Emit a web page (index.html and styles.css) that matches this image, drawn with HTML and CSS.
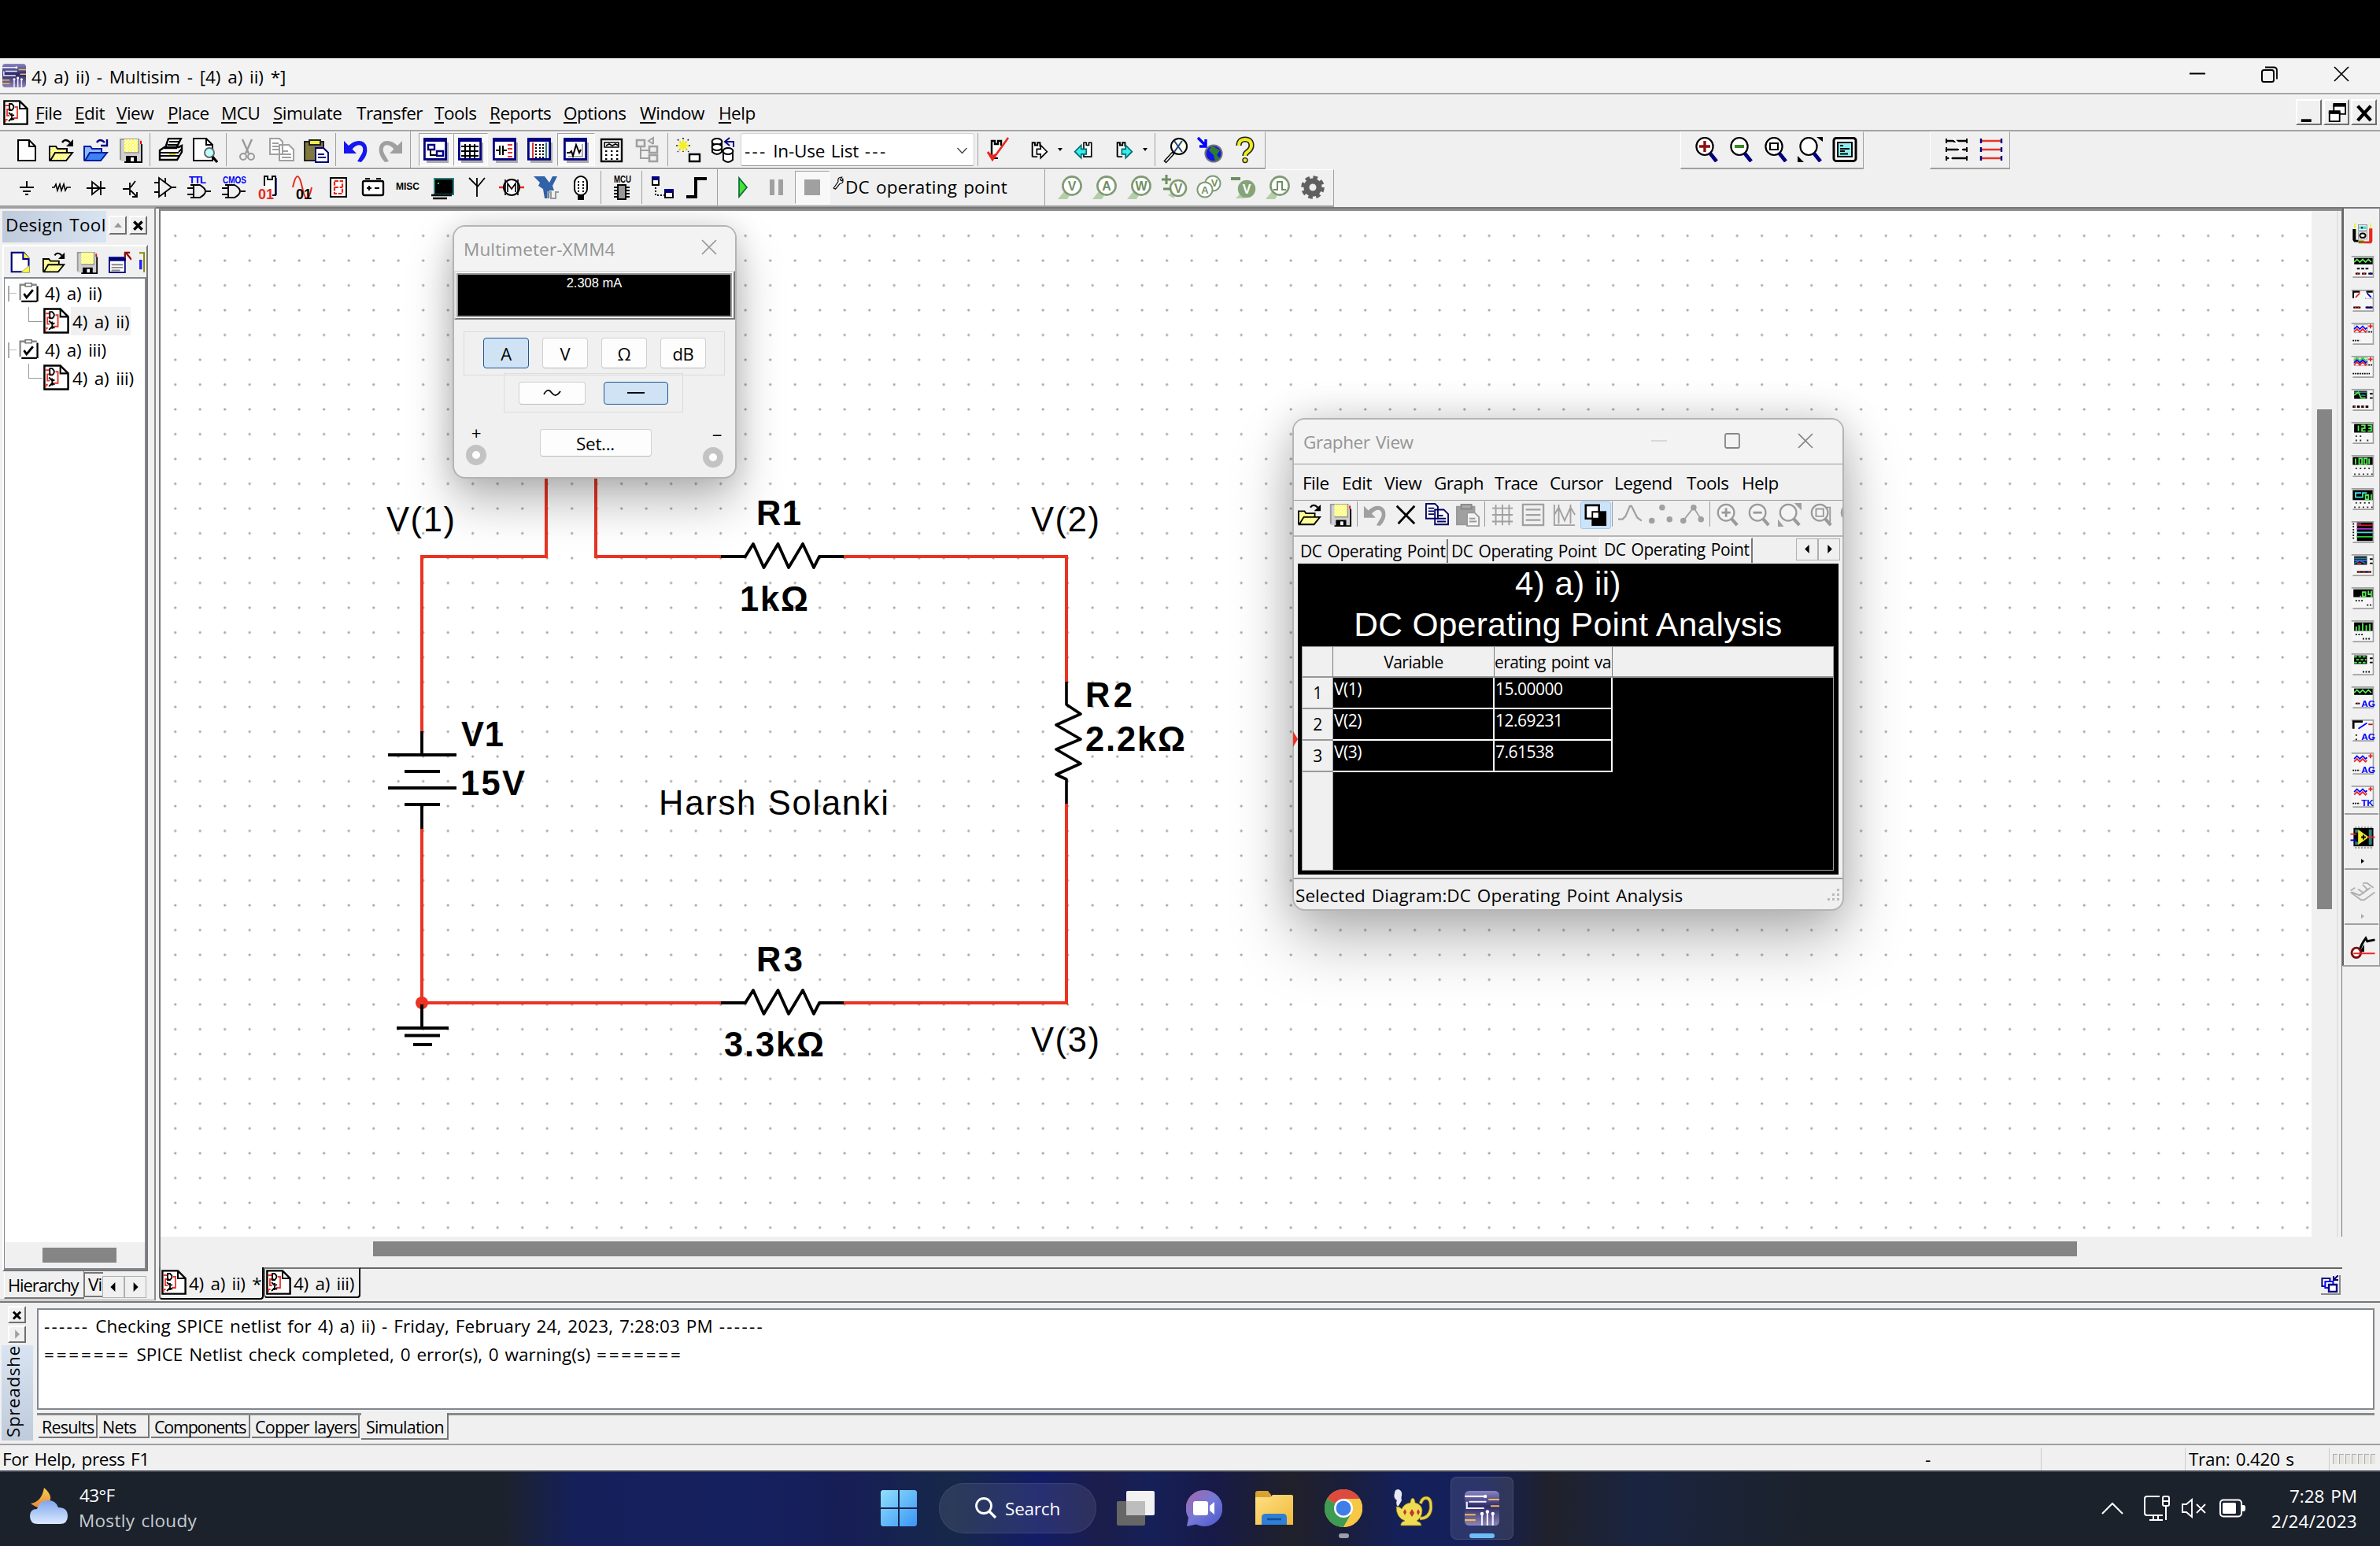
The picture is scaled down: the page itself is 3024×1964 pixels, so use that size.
FILE: index.html
```html
<!DOCTYPE html>
<html lang="en">
<head>
<meta charset="utf-8">
<title>4) a) ii) - Multisim</title>
<link rel="stylesheet" href="styles.css">
</head>
<body>
<svg class="defs" aria-hidden="true">
  <defs>
    <linearGradient id="gApp" x1="0" y1="0" x2="0" y2="1"><stop offset="0" stop-color="#8a86c4"/><stop offset=".45" stop-color="#2c2a66"/><stop offset="1" stop-color="#8d86b8"/></linearGradient>
    <linearGradient id="gWin" x1="0" y1="0" x2="1" y2="1"><stop offset="0" stop-color="#8fe0fb"/><stop offset="1" stop-color="#3b95f5"/></linearGradient>
    <linearGradient id="gChat" x1="0" y1="0" x2="1" y2="1"><stop offset="0" stop-color="#a767a5"/><stop offset=".5" stop-color="#7478d8"/><stop offset="1" stop-color="#4b57c9"/></linearGradient>
    <linearGradient id="gFold" x1="0" y1="0" x2="1" y2="1"><stop offset="0" stop-color="#ffe085"/><stop offset="1" stop-color="#f0b93a"/></linearGradient>
    <linearGradient id="gCloud" x1="0" y1="0" x2="0" y2="1"><stop offset="0" stop-color="#7fa6ec"/><stop offset="1" stop-color="#dbe9ff"/></linearGradient>
    <linearGradient id="gMoon" x1="0" y1="0" x2="0" y2="1"><stop offset="0" stop-color="#f5cf55"/><stop offset="1" stop-color="#ea8436"/></linearGradient>
    <pattern id="yel" width="2" height="2" patternUnits="userSpaceOnUse"><rect width="2" height="2" fill="#fff"/><path d="M0 0h1v1H0zM1 1h1v1H1z" fill="#ff3"/></pattern>
  </defs>
  <symbol id="i-app" viewBox="0 0 16 16"><rect width="16" height="16" rx="2" fill="url(#gApp)"/><path d="M0 2.500h9M1 5v3h8M2 5h8M8 16v-5M10.500 16v-6M13 16v-5" fill="none" stroke="#eef" stroke-width=".8"/><path d="M0 11h5M0 13.500h5M11 4h5M12 7h4" stroke="#f3b956" stroke-width=".8"/><g fill="#fff"><circle cx="9.500" cy="2.500" r=".8"/><circle cx="8" cy="10.500" r=".8"/><circle cx="10.500" cy="9.600" r=".8"/><circle cx="13" cy="10.500" r=".8"/></g></symbol>
  <symbol id="i-sch" viewBox="0 0 16 16"><path d="M.7.700h9.800L15.300 5.500v9.800H.7z" fill="#fff" stroke="#000" stroke-width="1.200"/><path d="M10.500 1v4.500H15" fill="none" stroke="#000"/><path d="M1.200 3.500H4M1.500 14v-1.500h1.300M4 10H2.500V6H5M7.500 4.500H9v7H6.500" fill="none" stroke="#e8332a" stroke-width=".9"/><path d="M4 2.500h1.500q2.500 2 0 4H4zM3.500 8l2 2 1.500-.5M3.500 13.500l2-2 1.500 1M5.500 8.500v4.500" fill="none" stroke="#000" stroke-width=".9"/></symbol>
  <symbol id="i-new" viewBox="0 0 16 16"><path d="M2.500 1.500h7l4 4v9h-11z" fill="#fff" stroke="#000"/><path d="M9.500 1.500v4h4" fill="none" stroke="#000"/></symbol>
  <symbol id="i-newb" viewBox="0 0 16 16"><path d="M1.500 1v13.500h12V5L10 1z" fill="#fff" stroke="#000080" stroke-width="1.200"/><path d="M10 1v4h4M14 10v5H8z" fill="#ff3" stroke="#888" stroke-width=".4"/><path d="M9.500 1.500v4h4" fill="none" stroke="#000080"/></symbol>
  <symbol id="i-open" viewBox="0 0 16 16"><path d="M.5 14.500v-9h4l1 1.500h6v2" fill="url(#yel)" stroke="#000"/><path d="M1 14.500l3-5h11l-4 5z" fill="url(#yel)" stroke="#000"/><path d="M8.500 3q2-3 5 0" fill="none" stroke="#000" stroke-width="1.200"/><path d="M15.500 1v4.500H11z"/></symbol>
  <symbol id="i-openb" viewBox="0 0 16 16"><path d="M.5 14.500v-9h4l1 1.500h6v2" fill="#8db8ff" stroke="#0a1c9c"/><path d="M1 14.500l3-5h11l-4 5z" fill="#3b82f5" stroke="#0a1c9c"/><path d="M8.500 3q2-3 5 0M15 1v4h-4" fill="none" stroke="#000080" stroke-width="1.200"/></symbol>
  <symbol id="i-save" viewBox="0 0 16 16"><path d="M1 1h14v14H2l-1-1z" fill="#d0d0d0"/><path d="M15 4v11.500H4" fill="none" stroke="#000"/><path d="M1.500 14V1h12" fill="none" stroke="#999"/><rect x="4" y="1" width="9" height="8" fill="url(#yel)"/><path d="M4 9.500h9V1" fill="none" stroke="#999" stroke-width=".8"/><rect x="5" y="11.500" width="7" height="4"/><rect x="8" y="12.500" width="2" height="2.500" fill="#fff"/><path d="M14 2h1v2h-1z" fill="red"/></symbol>
  <symbol id="i-print" viewBox="0 0 16 16"><path d="M4.500 6.500l2-6h8l-3 6zM1 8l3-2h9l2-1v4l-3 5H1z" fill="#fff" stroke="#000" stroke-width="1.200"/><path d="M7 2.500h6M6 4.500h6M1 9.500h12M1 11.500h12M13 9l2-2" stroke="#000"/><path d="M7 10h4v1H7z" fill="#dd0"/></symbol>
  <symbol id="i-prev" viewBox="0 0 16 16"><path d="M.5.500h8l4 4v10H.5z" fill="#fff" stroke="#000"/><path d="M8.500.500v4h4" fill="none" stroke="#000"/><circle cx="10.500" cy="9.500" r="3" fill="#bff" stroke="#666"/><path d="M12.500 12l3 3.500" stroke="#000" stroke-width="1.600"/></symbol>
  <symbol id="i-cut" viewBox="0 0 16 16"><path d="M5 1l4 9M11 1L7 10" stroke="#999" stroke-width="1.200" fill="none"/><circle cx="5.500" cy="12" r="2" fill="none" stroke="#999"/><circle cx="10.500" cy="12" r="2" fill="none" stroke="#999"/></symbol>
  <symbol id="i-copy" viewBox="0 0 16 16"><path d="M.5.500h6l2 2v8h-8zM6.500 4.500h6l3 3v7h-9z" fill="#fff" stroke="currentColor"/><path d="M2 3.500h4M2 5.500h4M2 7.500h4M8 8.500h4M8 10.500h6M8 12.500h6" stroke="currentColor"/></symbol>
  <symbol id="i-paste" viewBox="0 0 16 16"><path d="M.5 2.500h12v12H.5z" fill="#807840" stroke="#222"/><path d="M3.500 1.500h7v3h-7z" fill="#ee4" stroke="#222"/><path d="M7.500 6.500h5l3 3v6h-8z" fill="#fff" stroke="#000080"/><path d="M9 10.500h4M9 12.500h5" stroke="#000080"/></symbol>
  <symbol id="i-pasteg" viewBox="0 0 16 16"><path d="M.5 2.500h12v12H.5z" fill="#a0a0a0" stroke="#999"/><path d="M3.500 1h7v3h-7z" fill="#aaa" stroke="#888"/><path d="M7.500 6.500h5l3 3v6h-8z" fill="#f4f4f4" stroke="#999"/><path d="M9 10.500h4M9 12.500h5" stroke="#999"/></symbol>
  <symbol id="i-undo" viewBox="0 0 16 16"><path d="M.5 2v8h8L5.800 7.200Q9 3.800 11.500 5q2 1.500.5 5l-3 5 2.500.5Q16 11 15 6q-1-4-5-4-3.500 0-6.500 3z" fill="currentColor"/></symbol>
  <symbol id="i-page" viewBox="0 0 16 16"><path d="M2 3h14v13H2z" fill="#aaa"/><path d="M.7.700h13.600v13H.7z" fill="#fff" stroke="#000080" stroke-width="1.400"/><path d="M0 0h15v2.500H0z" fill="#000080"/></symbol>
  <symbol id="i-calc" viewBox="0 0 16 16"><path d="M1 1h13v14H1z" fill="#fff" stroke="#000" stroke-width="1.200"/><path d="M3 3h9v3H3zM4 5l2-1 2 1 2-1 2 1" fill="none" stroke="#000" stroke-width=".8"/><path d="M3.500 8h1.200v1H3.500zM7 8h1.200v1H7zM10.500 8h1.200v1h-1.200zM3.500 10.500h1.200v1H3.500zM7 10.500h1.200v1H7zM10.500 10.500h1.200v1h-1.200zM3.500 13h1.200v1H3.500zM7 13h1.200v1H7zM10.500 13h1.200v1h-1.200z"/></symbol>
  <symbol id="i-gate" viewBox="0 0 16 16"><path d="M2 6.500h6q7 4 0 8H2M4 6.500v8M0 8.500h4M0 12.500h4M12 10.500h3" fill="none" stroke="#000"/></symbol>
  <symbol id="i-chk" viewBox="0 0 16 16"><path d="M1 2h13.500v13H1z" fill="#fff"/><path d="M1 14V2h13" fill="none" stroke="#888" stroke-width="1.400"/><path d="M14.500 3v12M2 15h12" stroke="#000" stroke-width="1.400"/><path d="M5 .8h5v2.400H5z" fill="#fff" stroke="#777"/><path d="M4 9l2 3 5-6" fill="none" stroke="#000" stroke-width="1.700"/></symbol>
  <symbol id="i-probe" viewBox="0 0 16 16"><path d="M0 15.500l5-6 3 3-2 3z" fill="#b3cfa9"/><circle cx="9" cy="7" r="5.800" fill="#fff" stroke="#7f9a73" stroke-width="1.300"/></symbol>
  <symbol id="i-x" viewBox="0 0 20 20"><path d="M1 1l18 18M19 1L1 19" fill="none" stroke="currentColor" stroke-width="1.700"/></symbol>
  <symbol id="i-bx" viewBox="0 0 14 14"><path d="M2 3l9 9M11 3l-9 9" stroke="#000" stroke-width="3"/></symbol>
  <symbol id="i-mag" viewBox="0 0 16 16"><ellipse cx="7" cy="6" rx="5.300" ry="5.500" fill="#fff" stroke="#000" stroke-width="1.100"/><path d="M10.500 10.500l4 5" stroke="#000080" stroke-width="2.400"/></symbol>
  <symbol id="i-magg" viewBox="0 0 16 16"><circle cx="7" cy="6.500" r="5.500" fill="#f4f4f4" stroke="#9a9a9a" stroke-width="1.200"/><path d="M10.500 10.500l4 4.500" stroke="#9a9a9a" stroke-width="2.200"/></symbol>
  <symbol id="i-comp" viewBox="0 0 16 16"><path d="M3.500 13V2h2v2h2V2h2v3" fill="#fff" stroke="#000" stroke-width="1.200"/><path d="M3.500 13h4" stroke="#000"/></symbol>
  <symbol id="i-ins" viewBox="0 0 16 16"><path d="M0 1h16v15H0z" fill="#f6f6f6"/><path d="M0 1h15.500v14.500H1" fill="none" stroke="#a0a0a0"/></symbol>
  <symbol id="i-tri" viewBox="0 0 6 10"><path d="M1 0l5 5-5 5z" fill="currentColor"/></symbol>
</svg>

<div class="screen">
  <div class="blackbar"></div>
  <header class="titlebar">
    <svg class="app-ic"><use href="#i-app"/></svg>
    <span class="t-title">4) a) ii) - Multisim - [4) a) ii) *]</span>
    <div class="winctl">
      <svg width="20" height="20" viewBox="0 0 20 20"><path d="M0 9.500h20" stroke="#000" stroke-width="2"/></svg>
      <svg width="21" height="21" viewBox="0 0 21 21"><rect x="1" y="5" width="15" height="15" rx="2.500" fill="none" stroke="#000" stroke-width="2"/><path d="M5 1.500h11q4 0 4 4v11" fill="none" stroke="#000" stroke-width="1.800"/></svg>
      <svg width="20" height="20"><use href="#i-x"/></svg>
    </div>
  </header>
  <nav class="menubar">
    <svg class="doc-ic"><use href="#i-sch"/></svg>
    <span style="width:50px"><u>F</u>ile</span><span style="width:53px"><u>E</u>dit</span><span style="width:65px"><u>V</u>iew</span><span style="width:68px"><u>P</u>lace</span><span style="width:66px"><u>M</u>CU</span><span style="width:106px"><u>S</u>imulate</span><span style="width:99px">Tra<u>n</u>sfer</span><span style="width:70px"><u>T</u>ools</span><span style="width:94px"><u>R</u>eports</span><span style="width:97px"><u>O</u>ptions</span><span style="width:100px"><u>W</u>indow</span><span><u>H</u>elp</span>
    <div class="mdi">
      <b><svg viewBox="0 0 13 13"><path d="M1 11h7v2H1z"/></svg></b>
      <b><svg viewBox="0 0 13 13"><path d="M4.500 1.500h8v6h-8z" fill="#fff" stroke="#000"/><path d="M4 0h9v2.500H4z"/><path d="M1.500 6.500h7v6h-7z" fill="#fff" stroke="#000"/><path d="M1 5h8v2.500H1z"/></svg></b>
      <b><svg viewBox="0 0 13 13"><path d="M2 2l9 10M11 2L2 12" stroke="#000" stroke-width="2.300"/></svg></b>
    </div>
  </nav>

  <div class="toolrow">
    <div class="toolbar tb1">
      <i><svg><use href="#i-new"/></svg></i><i><svg><use href="#i-open"/></svg></i><i><svg><use href="#i-openb"/></svg></i><i><svg><use href="#i-save"/></svg></i><hr>
      <i><svg><use href="#i-print"/></svg></i><i><svg><use href="#i-prev"/></svg></i><hr class="w9">
      <i><svg><use href="#i-cut"/></svg></i><i class="gray"><svg><use href="#i-copy"/></svg></i><i><svg><use href="#i-paste"/></svg></i><hr class="w6">
      <i class="blue"><svg><use href="#i-undo"/></svg></i><i class="gray flip"><svg><use href="#i-undo"/></svg></i><hr class="w14 full">
      <i class="on"><svg viewBox="0 0 16 16"><use href="#i-page"/><path d="M3 4.500h4v3H3zM8.500 8.500h4v3h-4z" fill="#fff" stroke="#000080" stroke-width="1.200"/><path d="M4.500 8v3H8" fill="none" stroke="#000"/></svg></i>
      <i class="on"><svg viewBox="0 0 16 16"><use href="#i-page"/><path d="M2 5.500h11M2 8.500h11M2 11.500h11M4.500 4v9M7.500 4v9M10.500 4v9" stroke="#000"/></svg></i>
      <i><svg viewBox="0 0 16 16"><use href="#i-page"/><path d="M2 8h2M7 8h2M4.500 5v6M6.500 5v6" stroke="#000"/><path d="M9.500 4.500h3M9.500 7h3M9.500 9.500h3M9.500 12h3" stroke="#d33"/></svg></i>
      <i><svg viewBox="0 0 16 16"><use href="#i-page"/><path d="M3.500 3v10" stroke="#d33"/><path d="M12 3v10" stroke="#2a8080"/><path d="M5.500 4v9M8 4v9M10 4v9" stroke="#000" stroke-dasharray="1 1"/></svg></i>
      <i class="on wide"><svg viewBox="0 0 16 16"><use href="#i-page"/><path d="M3 12h9V4" fill="none" stroke="#aaa"/><path d="M2 9.500h2l1-1 1 3 2-7 2 5 1-2" fill="none" stroke="#000"/></svg></i>
      <i><svg><use href="#i-calc"/></svg></i>
      <i><svg viewBox="0 0 16 16"><path d="M1.500 1.500h5v4h-5zM9.500 5.500h5v4h-5zM9.500 11h5v4h-5z" fill="#eee" stroke="#a0a0a0" stroke-width="1.300"/><path d="M4 6v7h5M4 8h5M12 4V0l-3 2 3 2" fill="none" stroke="#a0a0a0"/></svg></i><hr class="w9">
      <i><svg viewBox="0 0 16 16"><path d="M1 1l7 8M8 1L1 9M4.500 0v10M0 5h9" stroke="#222" stroke-width=".8" stroke-dasharray="1 1"/><path d="M2 2.500l5 5M7 2.500l-5 5M4.500 1.500v7M1 5h7" stroke="#f5ee20" stroke-width="1.200"/><path d="M8.500 10.500h6.500v4.500H8.500z" fill="#fff" stroke="#000" stroke-width="1.200"/></svg></i>
      <i><svg viewBox="0 0 16 16"><path d="M1 2v7q3 3 6 0V2M8 8v6q3 3 6 0V8" fill="#fff" stroke="#000"/><ellipse cx="4" cy="2.500" rx="3.200" ry="2" fill="#fff" stroke="#000"/><ellipse cx="4" cy="6" rx="3.200" ry="2" fill="#fff" stroke="#000"/><ellipse cx="11" cy="8.500" rx="3.200" ry="2" fill="#fff" stroke="#000"/><path d="M14.500 6V2.500H10M12 0l-3 2.500L12 5" fill="none" stroke="#000080"/></svg></i>
      <div class="combo"><span><b class="da">---</b> In-Use List <b class="da">---</b></span><svg width="13" height="9" viewBox="0 0 13 9"><path d="M.5 1l6 6.500L12.500 1" fill="none" stroke="#444" stroke-width="1.300"/></svg></div><hr class="w9">
      <i><svg viewBox="0 0 16 16"><use href="#i-comp"/><path d="M1 9l3 5L14 0" fill="none" stroke="#e8281c" stroke-width="1.300"/><path d="M1 8.500l3 2.500 2-1-2 5z" fill="#e8281c"/></svg></i>
      <i class="w50 sm"><svg viewBox="0 0 16 16"><use href="#i-comp"/><path d="M7 7h3V4l5 5-5 5v-3H7z" fill="#fff" stroke="#000"/></svg></i><s class="dn"></s>
      <i class="sm"><svg viewBox="0 0 16 16"><path d="M8 13V2h2v2h2V2h2v11z" fill="#fff" stroke="#000"/><path d="M10 7H6V4L1 9l5 5v-3h4z" fill="#3ee" stroke="#066"/></svg></i>
      <i class="w50 sm"><svg viewBox="0 0 16 16"><use href="#i-comp"/><path d="M7 7h3V4l5 5-5 5v-3H7z" fill="#3ee" stroke="#066"/></svg></i><s class="dn"></s><hr class="w9">
      <i><svg viewBox="0 0 16 16"><ellipse cx="10" cy="5.500" rx="5" ry="5" fill="#ffe" stroke="#000"/><path d="M7 2l5 7M12 2L7 9" stroke="#248" /><path d="M6.500 9.500L1 15.500" stroke="#000" stroke-width="2.200"/><path d="M6 10l-4.500 5" stroke="#fff" stroke-width=".8"/></svg></i>
      <i><svg viewBox="0 0 16 16"><circle cx="10" cy="10" r="5.300" fill="#1414e8" stroke="#777"/><path d="M9 5l5 3-2 3 2 2-3 2-1-4-3-3z" fill="#2e7d32"/><path d="M0 0l5 5M5 1v4.500H1" stroke="#00f" stroke-width="1.700" fill="none"/></svg></i>
      <i><svg viewBox="0 0 16 16"><path d="M4 5q0-4 4-4t4 4q0 2-2.500 4Q8 10 8 11.500" fill="none" stroke="#222" stroke-width="3.600"/><path d="M4 5q0-4 4-4t4 4q0 2-2.500 4Q8 10 8 11.500" fill="none" stroke="#ee2" stroke-width="2"/><circle cx="8" cy="14.300" r="1.500" fill="#ee2" stroke="#222" stroke-width=".7"/></svg></i>
    </div>
    <div class="toolbar tbz">
      <i><svg viewBox="0 0 16 16"><use href="#i-mag"/><path d="M7 2.500v7M3.500 6h7" stroke="#8b1010" stroke-width="1.700"/></svg></i>
      <i><svg viewBox="0 0 16 16"><use href="#i-mag"/><path d="M4 6h6" stroke="#3a8a20" stroke-width="2"/></svg></i>
      <i><svg viewBox="0 0 16 16"><use href="#i-mag"/><path d="M4.500 4h5v4h-5z" fill="none" stroke="#000"/></svg></i>
      <i><svg viewBox="0 0 16 16"><use href="#i-mag"/><path d="M12 0h4v3zM0 12v4h4z"/></svg></i>
      <i><svg viewBox="0 0 16 16"><rect x="1" y=".7" width="14" height="14.500" rx="1.500" fill="#fff" stroke="#000" stroke-width="1.500"/><path d="M3.500 3.500h9v9h-9z" fill="#8eeeee" stroke="#000"/><path d="M5 5.500h2M5 7.500h6M5 9h3M5 10.800h5" stroke="#000"/></svg></i>
    </div>
    <div class="toolbar tbe">
      <i><svg viewBox="0 0 16 16"><path d="M1 2.500h14M1 8h14M1 13.500h14" stroke="#000" stroke-width="1.300"/><path d="M1.500 1v3M1.500 6.500v3M1.500 12v3M14.500 1v3M14.500 6.500v3M14.500 12v3" stroke="#000"/><path d="M6 1l3 3-3 0M9 6.500l3 3M12 6.500l-3 3M3 12l2 3M5 12l-2 3" stroke="#fff" stroke-width="1.100"/></svg></i>
      <i><svg viewBox="0 0 16 16"><path d="M1 2.500h14M1 8h14M1 13.500h14" stroke="#e8332a" stroke-width="1.300"/><path d="M1.500 1v3M1.500 6.500v3M1.500 12v3M14.500 1v3M14.500 6.500v3M14.500 12v3" stroke="#000080" stroke-width="1.200"/></svg></i>
    </div>
  </div>

  <div class="toolrow r2">
    <div class="toolbar tb2">
      <i><svg viewBox="0 0 16 16"><path d="M8 4v4M3.500 8h9M5.500 10.500h5M7 12.500h2" stroke="#000"/></svg></i>
      <i><svg viewBox="0 0 16 16"><path d="M2 8h1.500l1-2 1 4 1.500-4 1 4 1.500-4 1 4 1-2H14" fill="none" stroke="#000" stroke-width=".8"/></svg></i>
      <i><svg viewBox="0 0 16 16"><path d="M2 8.500h12M5.500 4.500v8l5-4zM11 4v9" fill="none" stroke="#000" stroke-width=".9"/></svg></i>
      <i><svg viewBox="0 0 16 16"><path d="M3 9h4M7.500 5v8M8 8l3-4M8 10l4 4M12 11v3H9" fill="none" stroke="#000" stroke-width=".9"/></svg></i>
      <i><svg viewBox="0 0 16 16"><path d="M4 2v12l8-6zM1 5h3M1 11h3M12 8h3M8 2v3M8 11v3" fill="none" stroke="#000" stroke-width=".9"/></svg></i>
      <i><svg viewBox="0 0 16 16"><use href="#i-gate"/><text x="1" y="5.500" class="it b7" fill="#00f" textLength="11">TTL</text></svg></i>
      <i><svg viewBox="0 0 16 16"><use href="#i-gate"/><text x="0.500" y="5.500" class="it b7" fill="#00f" textLength="15" lengthAdjust="spacingAndGlyphs">CMOS</text></svg></i>
      <i><svg viewBox="0 0 16 16"><path d="M5 7V1h2v2h3V1h2v12h-2" fill="#fff" stroke="#000"/><path d="M12.500 2v11" stroke="#000080" stroke-width=".7"/><text x="1" y="15.500" class="it b10" fill="#e8281c" textLength="10" lengthAdjust="spacingAndGlyphs">01</text></svg></i>
      <i><svg viewBox="0 0 16 16"><path d="M1 8q3-14 6 0t6 0" fill="none" stroke="#e8281c"/><text x="3" y="15.500" class="it b10" textLength="10" lengthAdjust="spacingAndGlyphs">01</text></svg></i>
      <i><svg viewBox="0 0 16 16"><path d="M3 2h10v12H3z" fill="#fff" stroke="#000"/><path d="M5.500 4h5v8h-5zM5.500 8h5" fill="none" stroke="#e8281c" stroke-width="1.100" stroke-dasharray="2.500 .8"/></svg></i>
      <i><svg viewBox="0 0 16 16"><rect x="1.500" y="4" width="13" height="9" rx="1" fill="#fff" stroke="#000" stroke-width="1.200"/><path d="M3 2.500h3M10 2.500h3M4 8.500h3M5.500 7v3M9 8.500h3" stroke="#000"/></svg></i>
      <i><svg viewBox="0 0 16 16"><text x="0.500" y="9.500" class="it b6" textLength="15" lengthAdjust="spacingAndGlyphs">MISC</text></svg></i>
      <i><svg viewBox="0 0 16 16"><path d="M3 2.500h12v10H3z" stroke="#2a8080"/><path d="M1 13h13M2 15h9" stroke="#000" stroke-width="1.300"/><path d="M5 5h1v1H5z" fill="#3f3"/></svg></i>
      <i><svg viewBox="0 0 16 16"><path d="M8 14V7L3 2M8 8l5-6M8 2v6" fill="none" stroke="#000" stroke-width=".9"/></svg></i>
      <i><svg viewBox="0 0 16 16"><path d="M0 8h3M13 8h3" stroke="#e8281c" stroke-width="1.300"/><circle cx="8" cy="8" r="5" fill="#fff" stroke="#000"/><path d="M5.500 11V5.500L8 9l2.500-3.500V11M4 3v10M12 3v10" fill="none" stroke="#000" stroke-width=".8"/></svg></i>
      <i><svg viewBox="0 0 16 16"><path d="M0 1h7l3 4 2-4h3l-3 6 1 3h-3v5H7l-1-6-3-2 1-2z" fill="#2f62a8"/><path d="M9 15v-4h2v4h3v-4h2" fill="none" stroke="#999"/></svg></i>
      <i><svg viewBox="0 0 16 16"><rect x="4" y="1" width="8" height="12" rx="4" fill="#fff" stroke="#000"/><path d="M6.500 4v7M9.500 4v7" stroke="#000" stroke-dasharray="1 1"/><path d="M6 13h4v3H6z"/></svg></i><hr class="w8">
      <i><svg viewBox="0 0 16 16"><text x="3" y="5" class="it b6" textLength="11" lengthAdjust="spacingAndGlyphs">MCU</text><path d="M5.500 6.500h5v9h-5z" fill="#999" stroke="#000"/><path d="M3 8h2M3 10h2M3 12h2M3 14h2M11 8h2M11 10h2M11 12h2M11 14h2" stroke="#000"/></svg></i><hr class="w8">
      <i><svg viewBox="0 0 16 16"><path d="M1.500 2.500h4v4h-4zM9.500 10.500h5v4h-5z" fill="#fff" stroke="#000"/><path d="M1 1h5v2.500H1zM9 9h6v2.500H9z" fill="#000080"/><path d="M3.500 8v5H9" fill="none" stroke="#000" stroke-dasharray="1 1"/></svg></i>
      <i><svg viewBox="0 0 16 16"><path d="M1 14h6V2.500h7" fill="none" stroke="#000" stroke-width="2"/></svg></i><hr class="w14 full">
      <i><svg viewBox="0 0 16 16"><path d="M5.500 2v12l5-6z" fill="#4ae03a" stroke="#063" stroke-width=".8"/></svg></i>
      <i><svg viewBox="0 0 16 16"><path d="M4.500 3v10M10 3v10" stroke="#a0a0a0" stroke-width="3"/></svg></i>
      <i class="on"><svg viewBox="0 0 16 16"><path d="M3 3h10v10H3z" fill="#a0a0a0"/></svg></i>
      <svg class="wrench" viewBox="0 0 12 16"><path d="M1 14L6 7q-1-5 4-5L8 5l2 1 1-2q1 5-3 5l-5 6z" fill="#fff" stroke="#000"/></svg>
      <span class="t-dc">DC operating point</span><hr class="w14 full">
      <i><svg viewBox="0 0 16 16"><use href="#i-probe"/><text x="9" y="10" class="it pr">V</text></svg></i>
      <i><svg viewBox="0 0 16 16"><use href="#i-probe"/><text x="9" y="10" class="it pr">A</text></svg></i>
      <i><svg viewBox="0 0 16 16"><use href="#i-probe"/><text x="9" y="10" class="it pr">W</text></svg></i>
      <i><svg viewBox="0 0 16 16"><path d="M4 13l4-3v5z" fill="#b3cfa9"/><circle cx="10.500" cy="8.500" r="5" fill="#fff" stroke="#7f9a73" stroke-width="1.300"/><path d="M0 3h6M3 0v6M1 9h5" stroke="#6f8f63" stroke-width="1.500"/><text x="10.500" y="11.500" class="it pr">V</text></svg></i>
      <i><svg viewBox="0 0 16 16"><circle cx="10.500" cy="5.500" r="4.800" fill="#fff" stroke="#7f9a73"/><circle cx="5.500" cy="9.500" r="4.800" fill="#fff" stroke="#7f9a73"/><text x="11.500" y="7.500" class="it pr ps">V</text><text x="5.500" y="12" class="it pr ps">A</text></svg></i>
      <i><svg viewBox="0 0 16 16"><path d="M3 15l4-4 2 4z" fill="#b3cfa9"/><circle cx="10" cy="9" r="5.600" fill="#86a37a"/><path d="M0 2.500h6" stroke="#6f8f63" stroke-width="2"/><text x="10" y="12" class="it pr wh">V</text></svg></i>
      <i><svg viewBox="0 0 16 16"><use href="#i-probe"/><path d="M5 9.500h2.500v-5h3v5H13" fill="none" stroke="#6f8f63"/></svg></i>
      <i><svg viewBox="0 0 16 16"><circle cx="8" cy="8" r="4" fill="none" stroke="#606060" stroke-width="3.500"/><circle cx="8" cy="8" r="6.300" fill="none" stroke="#606060" stroke-width="2.200" stroke-dasharray="2.800 2.150"/></svg></i>
    </div>
  </div>

  <main class="work">
    <aside class="left">
      <div class="dt-head"><b class="dt-title">Design Tool</b><em><svg width="12" height="8" viewBox="0 0 12 8"><path d="M1 7h10L6 1z" fill="#999"/></svg></em><em><svg width="16" height="16"><use href="#i-bx"/></svg></em></div>
      <div class="dt-box">
        <div class="dt-tools"><svg><use href="#i-newb"/></svg><svg><use href="#i-open"/></svg><svg><use href="#i-save"/></svg><svg viewBox="0 0 16 16"><path d="M.5 5h11v10H.5z" fill="#fff" stroke="#000080"/><path d="M0 4h12v3H0z" fill="#000080"/><path d="M2 9.500h8M2 11.500h8M2 13.500h6" stroke="#888"/><path d="M11 1h4M11.500 1v4M12 1l4 5" stroke="#8b1010" stroke-width="1.300"/></svg><svg class="cutic" viewBox="0 0 4 16"><path d="M0 1h3.500v14" fill="none" stroke="#880" stroke-width="1.200"/><path d="M0 6h2v7H0z" fill="#22f"/></svg></div>
        <div class="tree">
          <p class="root"><svg><use href="#i-chk"/></svg><span>4) a) ii)</span></p>
          <p class="leaf sel"><svg><use href="#i-sch"/></svg><span>4) a) ii)</span></p>
          <p class="root"><svg><use href="#i-chk"/></svg><span>4) a) iii)</span></p>
          <p class="leaf"><svg><use href="#i-sch"/></svg><span>4) a) iii)</span></p>
          <div class="treescroll"><div></div></div>
        </div>
      </div>
      <div class="dt-tabs"><span class="hi">Hierarchy</span><span class="vi">Vi</span><em class="prev"><svg width="8" height="12"><use href="#i-tri"/></svg></em><em><svg width="8" height="12"><use href="#i-tri"/></svg></em></div>
    </aside>

    <section class="mid">
      <div class="canvasrow">
        <div class="canvas">
          <svg class="sheet" width="2733" height="1302" viewBox="204 268 2733 1302">
            <defs><pattern id="dots" x="207" y="283.800" width="31.500" height="31.500" patternUnits="userSpaceOnUse"><path d="M14 15.700h3.400M15.700 14v3.400" stroke="#8a8a8a" stroke-width="1"/></pattern></defs>
            <rect x="210" y="290" width="2727" height="1280" fill="url(#dots)"/>
            <g fill="none" stroke="#ea3323" stroke-width="4">
              <path d="M536 929V707H694V600M757 600V707H916M1072 707h283V866M1355 1021v253H1072M916 1274H536V1053"/>
            </g>
            <circle cx="536" cy="1274" r="8" fill="#ea3323"/>
            <g fill="none" stroke="#000" stroke-width="3.800" stroke-linejoin="round">
              <path d="M916 707h31l10-16 13.500 30 18-30 13.500 30 18-30 14 30 7-14h31"/>
              <path d="M916 1274h31l10-16 13.500 30 18-30 13.500 30 18-30 14 30 7-14h31"/>
              <path d="M1355 866v29l18 12-31 14 31 18-31 13 31 18-31 14 13 6v31" stroke-width="3.600"/>
              <path d="M536 929v30M493 959h87M514 980h45M493 1001h87M514 1022h45M536 1022v31M536 1276v30M504 1306h66M514 1315.500h45M525 1327h24"/>
            </g>
            <g class="ct">
              <text x="491" y="675" textLength="87">V(1)</text><text x="1310" y="675" textLength="87">V(2)</text><text x="1310" y="1336" textLength="87">V(3)</text>
              <text x="837" y="1034.500" textLength="292">Harsh Solanki</text>
            </g>
            <g class="ct bold">
              <text x="961" y="667" textLength="57">R1</text><text x="940" y="776" textLength="87">1kΩ</text>
              <text x="586" y="947.500" textLength="54">V1</text><text x="585" y="1010" textLength="82">15V</text>
              <text x="961" y="1234" textLength="59">R3</text><text x="920" y="1342" textLength="127">3.3kΩ</text>
              <text x="1379" y="898" textLength="60">R2</text><text x="1379" y="954" textLength="127">2.2kΩ</text>
            </g>
          </svg>

          <div class="win mm">
            <div class="wt"><span>Multimeter-XMM4</span><svg width="20" height="20"><use href="#i-x"/></svg></div>
            <div class="lcd"><div>2.308 mA</div></div>
            <div class="grp g1"><button class="act">A</button><button>V</button><button>Ω</button><button>dB</button></div>
            <div class="grp g2"><button><svg width="24" height="10" viewBox="0 0 24 10"><path d="M1 7q5-9 10-2t11-2" fill="none" stroke="#000" stroke-width="1.700"/></svg></button><button class="act"><svg width="24" height="10" viewBox="0 0 24 10"><path d="M1 5h22" stroke="#000" stroke-width="2"/></svg></button></div>
            <div class="mm-foot"><div class="term"><span>+</span><b></b></div><button>Set...</button><div class="term neg"><span>−</span><b></b></div></div>
          </div>

          <div class="win gv">
            <div class="wt"><span>Grapher View</span><div class="gctl"><svg width="20" height="20" viewBox="0 0 20 20"><path d="M0 10h20" stroke="#d8d8d8" stroke-width="2"/></svg><svg width="20" height="20" viewBox="0 0 20 20"><rect x="1" y="1" width="18" height="18" rx="2" fill="none" stroke="#858585" stroke-width="1.800"/></svg><svg width="20" height="20"><use href="#i-x"/></svg></div></div>
            <div class="gmenu"><span style="width:50px">File</span><span style="width:54px">Edit</span><span style="width:63px">View</span><span style="width:77px">Graph</span><span style="width:70px">Trace</span><span style="width:82px">Cursor</span><span style="width:92px">Legend</span><span style="width:70px">Tools</span><span>Help</span></div>
            <div class="gtools">
              <i><svg><use href="#i-open"/></svg></i><i><svg><use href="#i-save"/></svg></i><hr>
              <i class="gray"><svg><use href="#i-undo"/></svg></i><i><svg viewBox="0 0 16 16"><path d="M2 2l12 12M14 2L3 14" stroke="#000" stroke-width="1.500"/></svg></i><i class="dk"><svg viewBox="0 0 16 16"><use href="#i-copy"/></svg></i><i><svg><use href="#i-pasteg"/></svg></i><hr>
              <i><svg viewBox="0 0 16 16"><path d="M1 3.500h14M1 8h14M1 12.500h14M3.500 1v14M8 1v14M12.500 1v14" stroke="#a0a0a0"/></svg></i>
              <i><svg viewBox="0 0 16 16"><path d="M1 1h14v14H1zM3 4.500h10M3 8h10M3 11.500h10" fill="none" stroke="#a0a0a0" stroke-width="1.200"/></svg></i>
              <i><svg viewBox="0 0 16 16"><path d="M1 1v14h14M4 1v13M12 1v13M1 8l3-5 4 9 4-9 3 5" fill="none" stroke="#a0a0a0"/></svg></i>
              <i class="hot"><svg viewBox="0 0 16 16"><path d="M5.500 5.500h10v10h-10z"/><path d="M1.500 1.500h9v9h-9z" fill="#fff" stroke="#000" stroke-width="1.400"/><path d="M6 6h4.500v4.500H6z" fill="#fff" stroke="#000"/></svg></i><hr class="n">
              <i><svg viewBox="0 0 16 16"><path d="M0 11h3l2-2 3-7h1l4 8 3 2" fill="none" stroke="#a0a0a0" stroke-width="1.200"/></svg></i>
              <i><svg viewBox="0 0 16 16"><g fill="#a0a0a0"><circle cx="2" cy="12" r="2"/><circle cx="9" cy="3" r="2"/><circle cx="14" cy="11" r="2"/></g></svg></i>
              <i><svg viewBox="0 0 16 16"><path d="M2 12l7-9 5 8" fill="none" stroke="#a0a0a0"/><g fill="#a0a0a0"><circle cx="2" cy="12" r="2"/><circle cx="9" cy="3" r="2"/><circle cx="14" cy="11" r="2"/></g></svg></i><hr class="z">
              <i><svg viewBox="0 0 16 16"><use href="#i-magg"/><path d="M7 3.500v6M4 6.500h6" stroke="#999" stroke-width="1.500"/></svg></i>
              <i><svg viewBox="0 0 16 16"><use href="#i-magg"/><path d="M4 6.500h6" stroke="#999" stroke-width="1.500"/></svg></i>
              <i><svg viewBox="0 0 16 16"><use href="#i-magg"/><path d="M11 0h5v5zM0 11v5h4z" fill="#a0a0a0"/></svg></i>
              <i><svg viewBox="0 0 16 16"><use href="#i-magg"/><path d="M4.500 4h5v5h-5zM11 3h3v10" fill="none" stroke="#999"/></svg></i>
              <i class="part"><svg><use href="#i-magg"/></svg></i>
            </div>
            <div class="gtabs"><span>DC Operating Point</span><span class="t2">DC Operating Point</span><span class="t3">DC Operating Point</span><div class="gar"><em class="prev"><svg width="7" height="11"><use href="#i-tri"/></svg></em><em><svg width="7" height="11"><use href="#i-tri"/></svg></em></div></div>
            <div class="plot">
              <div class="pt p1">4) a) ii)</div>
              <div class="pt p2">DC Operating Point Analysis</div>
              <div class="sheetbox">
                <div class="hd rh"></div><div class="hd">Variable</div><div class="hd cl"><span>erating point va</span></div><div class="hd last"></div>
                <div class="rn">1</div><div class="c">V(1)</div><div class="c v">15.00000</div><div></div>
                <div class="rn">2</div><div class="c">V(2)</div><div class="c v">12.69231</div><div></div>
                <div class="rn">3</div><div class="c">V(3)</div><div class="c v">7.61538</div><div></div>
                <div class="fill"></div>
              </div>
              <svg class="mark" width="6" height="20" viewBox="0 0 6 20"><path d="M0 0l6 10-6 10z" fill="#ea3323"/></svg>
            </div>
            <div class="gstat"><span>Selected Diagram:DC Operating Point Analysis</span><svg width="16" height="16" viewBox="0 0 8 8"><path d="M6 0h1.500v1.500H6zM6 3h1.500v1.500H6zM6 6h1.500v1.500H6zM3 3h1.500v1.500H3zM3 6h1.500v1.500H3zM0 6h1.500v1.500H0z" fill="#bbb"/></svg></div>
          </div>
        </div>
        <div class="vscroll"><div></div></div>
      </div>
      <div class="hscroll"><div></div></div>
      <div class="doctabs">
        <div class="dtab a"><svg><use href="#i-sch"/></svg><span>4) a) ii) *</span></div>
        <div class="dtab b"><svg><use href="#i-sch"/></svg><span>4) a) iii)</span></div>
        <div class="rest"><b><svg width="22" height="22" viewBox="0 0 11 11"><path d="M.7 2h5v5h-5z" fill="#fff" stroke="#000080"/><path d="M2.700 4h5v4h-5z" fill="#fff" stroke="#00f"/><path d="M5 6h5v4.500H5z" fill="#fff" stroke="#000080" stroke-width="1.200"/><path d="M11 0L8.500 2.500M8 .5V3h3" stroke="#000080" fill="none"/></svg></b></div>
      </div>
    </section>

    <aside class="right">
      <i><svg viewBox="0 0 16 16"><path d="M5 2h6v4H5z" fill="#fff" stroke="#999" stroke-width=".6"/><path d="M5.500 3h5v2h-5z" fill="#4dd"/><path d="M7 3.500h1v1H7z"/><path d="M5 7h6v5H5z" fill="#fff" stroke="#999" stroke-width=".6"/><ellipse cx="8" cy="9.500" rx="2" ry="1.500" fill="#fff" stroke="#000"/><path d="M2 1h1v3.500H2zM13 1h1v3.500h-1z" fill="#ee3"/><path d="M1 5h2.200v7.500H5V14H2l-1-1.500z"/><path d="M12.500 4.500h2.300v9L14 15H9v-1.500h3.500z" fill="#e8281c"/><path d="M5 13h4v2H5z" fill="#860"/></svg></i>
      <i><svg viewBox="0 0 16 16"><use href="#i-ins"/><path d="M2 2h13v4.500H2z" /><path d="M2 5l2-2 2 2 2-2 2 2 2-2 2 2" fill="none" stroke="#5e5"/><path d="M4 9.500h8" stroke="#000" stroke-dasharray="2 1"/><path d="M3 13h3M7.500 13h3M12 13h3" stroke="#000" stroke-width="1.200"/><path d="M4 13h1M8.500 13h1" stroke="#e22" stroke-width="1.500"/><path d="M13 13h1" stroke="#00f" stroke-width="1.500"/></svg></i>
      <i><svg viewBox="0 0 16 16"><use href="#i-ins"/><path d="M1.500 6.500V2H6M10.500 2H15M10 6.500h5" fill="none" stroke="#000" stroke-width="1.300"/><path d="M2 3h4v4H2zM10 3h5v4h-5z" fill="#fff"/><path d="M3 6l3-3" stroke="#e22"/><path d="M11 3l3 3" stroke="#00c"/><path d="M1.500 13h5M10 13h5" stroke="#000" stroke-width="1.200"/><path d="M2.500 13h1M4.500 13h1" stroke="#e22" stroke-width="1.500"/><path d="M11 13h1M13 13h1" stroke="#00f" stroke-width="1.500"/></svg></i>
      <i><svg viewBox="0 0 16 16"><use href="#i-ins"/><path d="M2 2h9.500v5.500H2z" fill="#fff" stroke="#aaa" stroke-width=".5"/><path d="M2 5l2-2 2 2 2-2 2 2 1-1" fill="none" stroke="#00f"/><path d="M2 7l2-2 2 2 2-2 2 2 1-1" fill="none" stroke="#e22"/><path d="M12 3h3M13.500 1.500v3" stroke="#e22"/><path d="M12 7h3M1 13h5" stroke="#000" stroke-dasharray="1 .6"/></svg></i>
      <i><svg viewBox="0 0 16 16"><use href="#i-ins"/><path d="M2 2h9.500v5.500H2z" fill="#fff" stroke="#aaa" stroke-width=".5"/><path d="M2 4l2-2 2 2 2-2 2 2 1-1" fill="none" stroke="#3d3"/><path d="M2 5.500l2-2 2 2 2-2 2 2 1-1" fill="none" stroke="#00f"/><path d="M2 7l2-2 2 2 2-2 2 2 1-1" fill="none" stroke="#e22"/><path d="M12 3h3M13.500 1.500v3" stroke="#e22"/><path d="M12 7h3M1 13h12" stroke="#000" stroke-dasharray="1 .6"/></svg></i>
      <i><svg viewBox="0 0 16 16"><use href="#i-ins"/><path d="M2 2h9v5.500H2z" fill="#000"/><path d="M2 3h9M7 5h3" stroke="#2a8080"/><path d="M2 5l3-2 2 4h3" fill="none" stroke="#5e5"/><path d="M13 4h2M13 7h2" stroke="#000"/><path d="M1 13h12" stroke="#000" stroke-width="1.500" stroke-dasharray="2 1"/><path d="M2 13h1M8 13h1" stroke="#e22"/></svg></i>
      <i><svg viewBox="0 0 16 16"><use href="#i-ins"/><path d="M2 2h13v6H2z"/><path d="M5 3v4M7 3h2.500v2H7.500v2H10M11.500 3H14v4h-2.500M12 5h2" fill="none" stroke="#5e5"/><path d="M3 10.500h4M3 13.500h4M11 13.500h2" stroke="#222" stroke-dasharray="1 2"/></svg></i>
      <i><svg viewBox="0 0 16 16"><use href="#i-ins"/><path d="M1 2h14v5.500H1z"/><path d="M3 3v4M12.500 3v4M5.500 3h2v4h-2zM9 3h2v4H9z" fill="none" stroke="#5e5"/><path d="M3 10h11M2 14h13" stroke="#222" stroke-dasharray="1 2"/></svg></i>
      <i><svg viewBox="0 0 16 16"><use href="#i-ins"/><path d="M1 2h14v7H1z"/><path d="M7 4H3v3h5V4h3" fill="none" stroke="#4dd"/><path d="M10 5.500h2v3h-2zM14 5v4" fill="none" stroke="#5e5"/><path d="M3 11h11M2 14h13" stroke="#222" stroke-dasharray="1 2"/></svg></i>
      <i><svg viewBox="0 0 16 16"><use href="#i-ins"/><path d="M4 1.500h11v13H4z"/><path d="M4 3.500h11" stroke="#c22"/><path d="M4 6h11M4 2.500h3" stroke="#a3c"/><path d="M4 8.500h11" stroke="#4dd"/><path d="M4 11.500h11" stroke="#3c3"/><path d="M1.500 2v12" stroke="#000" stroke-dasharray="1 1"/></svg></i>
      <i><svg viewBox="0 0 16 16"><use href="#i-ins"/><path d="M2 2h9v6H2z" fill="#112"/><path d="M2 3.500h9M2 7l4-2 4 2" stroke="#2a8080" fill="none"/><path d="M2 5h9" stroke="#36f"/><path d="M4 7h3" stroke="#e22"/><path d="M13 4h2M13 7h2" stroke="#000"/><path d="M4 13h10" stroke="#000" stroke-width="1.200"/><path d="M5 13h9" stroke="#e22" stroke-width="1.300" stroke-dasharray="1 2.500"/></svg></i>
      <i><svg viewBox="0 0 16 16"><use href="#i-ins"/><path d="M1.500 2H15v5.500H1.500z"/><path d="M6 7h1M8 4h2v3H8zM12 3v2.500h2M14 3v4.500" fill="none" stroke="#5e5"/><path d="M3 10h6M11 13h3" stroke="#000" stroke-dasharray="1 1"/></svg></i>
      <i><svg viewBox="0 0 16 16"><use href="#i-ins"/><path d="M2 2h13v6H2z"/><path d="M3.500 5v3M5.500 4v4M8 2.500V8M10.500 4v4M13 3v5" stroke="#5e5"/><path d="M3 10.500h5M8 13.500h6" stroke="#000" stroke-dasharray="1 1"/></svg></i>
      <i><svg viewBox="0 0 16 16"><use href="#i-ins"/><path d="M2 2h9v6H2z"/><path d="M2 3h9M2 7h9" stroke="#5e5" stroke-dasharray="2 1"/><path d="M3.500 5h7" stroke="#5e5" stroke-dasharray="2 1"/><path d="M13 4h2M13 7h2" stroke="#000"/><path d="M8 13.500h6" stroke="#000" stroke-dasharray="1 1"/></svg></i>
      <i><svg viewBox="0 0 16 16"><use href="#i-ins"/><path d="M2 2h13v4.500H2z"/><path d="M2 5l2-2 2 2 2-2 2 2 2-2 2 2" fill="none" stroke="#5e5"/><path d="M3 12.500h3" stroke="#000"/><path d="M4 12.500h1" stroke="#e22"/><text x="7" y="15" class="it b7" fill="#00f">AG</text></svg></i>
      <i><svg viewBox="0 0 16 16"><use href="#i-ins"/><path d="M1.500 7V2H8" fill="none" stroke="#000" stroke-width="1.500"/><path d="M5 7l6-4" stroke="#00f"/><path d="M12 4h3" stroke="#a22"/><path d="M3 11.500h1M3 14.500h1" stroke="#000"/><text x="7" y="15" class="it b7" fill="#00f">AG</text></svg></i>
      <i><svg viewBox="0 0 16 16"><use href="#i-ins"/><path d="M2 5l2-2 2 2 2-2 2 2 1-1" fill="none" stroke="#00f"/><path d="M2 7l2-2 2 2 2-2 2 2 1-1" fill="none" stroke="#e22"/><path d="M12 3h3M13.500 1.500v3" stroke="#e22"/><path d="M1 13h5" stroke="#000" stroke-dasharray="1 .6"/><text x="7" y="15" class="it b7" fill="#00f">AG</text></svg></i>
      <i><svg viewBox="0 0 16 16"><use href="#i-ins"/><path d="M2 5l2-2 2 2 2-2 2 2 1-1" fill="none" stroke="#00f"/><path d="M2 7l2-2 2 2 2-2 2 2 1-1" fill="none" stroke="#e22"/><path d="M12 3h3M13.500 1.500v3" stroke="#e22"/><path d="M1 13h5" stroke="#000" stroke-dasharray="1 .6"/><text x="7" y="15" class="it b7" fill="#00f">TK</text></svg></i>
      <hr>
      <i class="tall"><svg viewBox="0 0 16 16"><path d="M2 2h13v12H2z"/><path d="M3 1.500h11M3 15h11" stroke="#999" stroke-dasharray="1 1"/><path d="M3 3h2v2H3zM12 3h2v10h-2zM3 11h2v2H3z" fill="#2a8080"/><path d="M5 3v10l7-5z" fill="#ee3"/><path d="M7 8h3M8.500 6.500v3" stroke="#000"/><path d="M0 6h4M11 8h5" stroke="#e22"/><path d="M0 10h4" stroke="#00f"/></svg></i><s class="rt"></s>
      <hr>
      <i class="tall"><svg viewBox="0 0 16 16"><path d="M8 2h3l4 3M8 3l3 3-3 3M0 7l3-2M0 8l7 5h2l7-5M1 8l5 2 3-2 4-3M5 6l3 2" fill="none" stroke="#b0b0b0"/></svg></i><s class="rt g"></s>
      <hr>
      <i class="tall"><svg viewBox="0 0 16 16"><path d="M6 10q1-4 4-8l1 2 5-1" fill="none" stroke="#000" stroke-width="1.500"/><path d="M6 11l3-5v5z"/><ellipse cx="3.800" cy="11.500" rx="3" ry="3.200" fill="#fff" stroke="#7a1010" stroke-width="1.500"/><path d="M2 12h14" stroke="#e22"/></svg></i>
      <hr class="end">
    </aside>
  </main>

  <section class="sheetview">
    <div class="sv-side"><em><svg width="14" height="15"><use href="#i-bx"/></svg></em><em><svg width="7" height="12" class="gray"><use href="#i-tri"/></svg></em><div class="vtitle"><span>Spreadshee</span></div></div>
    <div class="sv-main">
      <div class="log"><p class="l1"><b class="da">------</b> Checking SPICE netlist for 4) a) ii) - Friday, February 24, 2023, 7:28:03 PM <b class="da">------</b></p><p class="l2"><b class="eq">=======</b> SPICE Netlist check completed, 0 error(s), 0 warning(s) <b class="eq">=======</b></p></div>
      <div class="svtabs"><span style="width:75px">Results</span><span style="width:64px">Nets</span><span class="cm" style="width:126px">Components</span><span style="width:137px">Copper layers</span><span class="cur" style="width:111px">Simulation</span></div>
    </div>
  </section>

  <footer class="status"><span class="help">For Help, press F1</span><span class="dash">-</span><span class="blank"></span><span class="tran">Tran: 0.420 s</span><span class="prog"><b></b><b></b><b></b><b></b><b></b><b></b><b></b></span></footer>

  <div class="taskbar">
    <div class="weather"><svg width="48" height="46" viewBox="0 0 48 46"><path d="M18 0q14 12 4 22-8 8-21-2 14-2 17-20z" fill="url(#gMoon)"/><path d="M10 46q-10 0-10-10 0-9 9-9 3-11 14-11 10 0 13 9 12 0 12 11 0 10-10 10z" fill="url(#gCloud)"/></svg><div><p>43°F</p><p class="sub">Mostly cloudy</p></div></div>
    <div class="apps">
      <svg class="start" width="46" height="46" viewBox="0 0 46 46"><path d="M2 0h20v22H0V2zM24 0h20l2 2v20H24zM0 24h22v22H2l-2-2zM24 24h22v20l-2 2H24z" fill="url(#gWin)"/></svg>
      <div class="search"><svg width="30" height="30" viewBox="0 0 30 30"><circle cx="12" cy="12" r="9.500" fill="none" stroke="#fff" stroke-width="2.800"/><path d="M19 19l8 8" stroke="#fff" stroke-width="3.200"/></svg><span>Search</span></div>
      <svg class="tv" width="48" height="46" viewBox="0 0 48 46"><rect x="0" y="14" width="36" height="31" rx="2" fill="#666"/><rect x="12" y="1" width="36" height="31" rx="2" fill="#f2f2f2"/><path d="M12 14h24v18H12z" fill="#bdbdbd"/></svg>
      <svg class="chat" width="46" height="46" viewBox="0 0 46 46"><path d="M23 0a23 23 0 1 1-10 43.500L1 46l2-11A23 23 0 0 1 23 0z" fill="url(#gChat)"/><rect x="9" y="14" width="19" height="18" rx="3" fill="#fff"/><path d="M30 20l6-5v16l-6-5z" fill="#fff"/></svg>
      <svg class="fold" width="50" height="46" viewBox="0 0 50 46"><path d="M1 4q0-3 3-3h13l4 5v8H1z" fill="#d9a032"/><path d="M1 9h19l3-3h24q2 0 2 2v36H1z" fill="url(#gFold)"/><path d="M9 44v-9q0-5 5-5h22q5 0 5 5v9z" fill="#2f7fd6"/><path d="M16 37h18" stroke="#124f93" stroke-width="2.500"/></svg>
      <div class="run"><svg width="48" height="48" viewBox="0 0 48 48"><circle cx="24" cy="24" r="24" fill="#f7c846"/><path d="M24 24L3.200 12A24 24 0 0 1 44.800 12z" fill="#dd4b3e"/><path d="M24 24L3.200 12A24 24 0 0 0 24 48l10.500-18z" fill="#3f9a52"/><path d="M24 12h20.800A24 24 0 0 1 24 48l10.400-18z" fill="#f7c846"/><circle cx="24" cy="24" r="12" fill="#fff"/><circle cx="24" cy="24" r="9.500" fill="#3f7de8"/></svg><b></b></div>
      <svg class="lamp" width="50" height="48" viewBox="0 0 50 48"><path d="M35 18q2-7 7-7 7 0 6 14-2 12-14 12" fill="none" stroke="#8f7d16" stroke-width="4.500"/><path d="M35 18q2-7 7-7 7 0 6 14-2 12-14 12" fill="none" stroke="#e6d24c" stroke-width="3"/><path d="M6 22q-3-4-1-8-5-3-3-9 0-5 5-5 5 2 4 8-1 3 0 6-2 4-5 8z" fill="#e9e9f4"/><path d="M4 22q5 0 7 3 3-7 11-8 0-5 3-6 3 1 3 6 8 2 9 9 0 10-7 14 6 2 6 6H10q-1-4 5-6Q4 36 4 22z" fill="#efdc53" stroke="#8f7d16" stroke-width=".7"/><path d="M15 25l2 4-2 4-2-4zM24 25l3 5-3 5-3-5zM32 25l2 4-2 4-2-4z" fill="#c3322c"/></svg>
      <div class="tile"><svg width="44" height="44"><use href="#i-app"/></svg><b></b></div>
    </div>
    <div class="tray">
      <svg class="chev" width="28" height="16" viewBox="0 0 28 16"><path d="M1 15L14 2l13 13" fill="none" stroke="#fff" stroke-width="2"/></svg>
      <svg class="net" width="34" height="34" viewBox="0 0 34 34"><path d="M20 2H4Q1 2 1 5v18q0 3 3 3h20M7 32h17M12 26v6M18 26v6M28 14v18" fill="none" stroke="#fff" stroke-width="2"/><rect x="24" y="2" width="8" height="12" rx="2" fill="none" stroke="#fff" stroke-width="2"/><path d="M24 8h8" stroke="#fff" stroke-width="2"/></svg>
      <svg class="spk" width="32" height="26" viewBox="0 0 32 26"><path d="M1 8h5l7-6v22l-7-6H1zM19 8l11 11M30 8L19 19" fill="none" stroke="#fff" stroke-width="1.900"/></svg>
      <svg class="bat" width="34" height="24" viewBox="0 0 34 24"><rect x="1" y="1.500" width="27" height="21" rx="4" fill="none" stroke="#fff" stroke-width="2"/><rect x="4" y="5" width="17" height="14" rx="1.500" fill="#fff"/><path d="M29 8h2q2 0 2 4t-2 4h-2z" fill="#fff"/></svg>
      <div class="clock"><p>7:28 PM</p><p class="date">2/24/2023</p></div>
    </div>
  </div>
</div>
</body>
</html>
```
FILE: styles.css
```css
* { box-sizing: border-box; }
body { margin: 0; background: #000; font-family: "Open Sans", "Noto Sans", sans-serif; font-size: 22.5px; letter-spacing: -0.5px; word-spacing: 2px; color: #000; }
p, hr { margin: 0; border: 0; }
i, em, b { font-style: normal; font-weight: 400; }
svg { display: block; flex: none; }
.defs { position: absolute; width: 0; height: 0; }
.screen { width: 3024px; height: 1964px; display: flex; flex-direction: column; background: #f0f0f0; overflow: hidden; white-space: nowrap; }
.blackbar { height: 74px; background: #000; }
.blue { color: #1616f0; }
.gray { color: #a0a0a0; }
.dk { color: #000060; }
.da { letter-spacing: 2.3px; }
.eq { letter-spacing: 2.8px; }
.it { font-family: "Liberation Sans", Arial, sans-serif; font-weight: 700; letter-spacing: 0; }
.b6, .b7 { font-size: 6.500px; }
.b10 { font-size: 9px; }
.pr { font-size: 8px; fill: #6f8f63; text-anchor: middle; }
.wh { fill: #fff; }
.ps { font-size: 6.500px; }

/* title and menu */
.titlebar { height: 46px; background: #f3f3f3; border-bottom: 2px solid #a3a3a3; display: flex; align-items: center; padding: 0 39px 0 3px; }
.app-ic { width: 30px; height: 30px; margin-right: 7px; }
.t-title { letter-spacing: -0.05px; word-spacing: 3px; margin-top: 3px; }
.winctl { margin-left: auto; display: flex; gap: 71px; margin-top: -3px; }
.menubar { height: 47px; border-top: 1px solid #fff; border-bottom: 2px solid #a3a3a3; display: flex; align-items: center; padding-left: 4px; }
.menubar > span { margin-top: 2px; }
.doc-ic { width: 32px; height: 32px; margin-right: 9px; }
.menubar u { text-decoration-thickness: 1.500px; text-underline-offset: 3px; }
.mdi { margin-left: auto; display: flex; gap: 2px; padding-right: 4px; }
.mdi b { width: 33px; height: 33px; border: 2px solid; border-color: #fff #6f6f6f #6f6f6f #fff; display: flex; align-items: center; justify-content: center; }
.mdi svg { width: 24px; height: 24px; }

/* toolbars */
.toolrow { height: 48px; display: flex; }
.toolbar { display: flex; align-items: center; height: 48px; border: 1px solid #a0a0a0; border-top-color: #fff; border-bottom-width: 2px; border-left: 0; }
.toolbar i { width: 44px; height: 42px; display: flex; align-items: center; justify-content: center; flex: none; }
.toolbar i > svg { width: 32px; height: 32px; overflow: visible; }
.toolbar i.on { background: #f8f8f8; border: 1px solid; border-color: #a0a0a0 #fff #fff #a0a0a0; }
.toolbar i.wide { width: 48px; }
.toolbar i.w50 { width: 44px; margin-left: 6px; }
.toolbar i.sm > svg { width: 26px; height: 28px; }
.flip { transform: scaleX(-1); }
.toolbar hr { width: 7px; height: 42px; flex: none; background: linear-gradient(#a0a0a0, #a0a0a0) 2px 0 / 1px 100% no-repeat; }
.toolbar hr.w9 { width: 9px; background-position-x: 4px; }
.toolbar hr.w8 { width: 8px; background-position-x: 3px; }
.toolbar hr.w6 { width: 6px; }
.toolbar hr.w14 { width: 14px; background-position-x: 3px; }
.toolbar hr.full { height: 46px; }
.dn { width: 6px; margin: 0 5px 0 3px; border: 3px solid transparent; border-top: 4px solid #000; border-bottom: 0; flex: none; }
.tb1 { width: 1608px; padding-left: 12px; }
.tb2 { width: 1695px; padding-left: 12px; }
.tb1 i > svg { margin-top: 2px; }
.combo { width: 297px; height: 42px; background: #fff; border: 1px solid #d0d0d0; border-bottom-color: #999; border-radius: 3px; display: flex; align-items: center; justify-content: space-between; padding: 2px 8px 0 4px; flex: none; letter-spacing: -0.2px; }
.tbz { margin-left: 527px; width: 233px; border-left: 1px solid #fff; padding-left: 10px; }
.tbe { margin-left: 84px; width: 102px; border-left: 1px solid #fff; padding-left: 11px; }
.wrench { width: 14px; height: 20px; margin: -12px 2px 0 4px; }
.t-dc { width: 250px; letter-spacing: 0.2px; margin-top: -1px; flex: none; }

/* main area */
.work { height: 1393px; display: flex; border-bottom: 2px solid #777; }
.left { width: 198px; border-top: 2px solid #a0a0a0; border-right: 2px solid #8a8a8a; padding: 3px 9px 0 3px; display: flex; flex-direction: column; height: 1389px; border-bottom: 1px solid #999; }
.dt-head { height: 40px; display: flex; align-items: center; gap: 3px; }
.dt-title { width: 133px; height: 40px; background: linear-gradient(90deg, #bfcadb, #d8e4f1); padding: 2px 0 0 4px; letter-spacing: .3px; }
em { display: flex; align-items: center; justify-content: center; border: 2px solid; border-color: #fff #6f6f6f #6f6f6f #fff; background: #f0f0f0; flex: none; }
.dt-head em { width: 23px; height: 24px; margin-top: -3px; }
.dt-box { margin-top: 3px; margin-right: -1px; height: 1304px; border: 2px solid; border-color: #fff #777 #777 #fff; display: flex; flex-direction: column; }
.dt-tools { height: 39px; display: flex; padding: 6px 0 0 7px; gap: 13px; }
.dt-tools svg { width: 29px; height: 29px; }
.dt-tools .cutic { width: 7px; margin-left: -3px; }
.tree { flex: 1; background: #fff; border: 2px solid #828790; border-left-width: 1px; display: flex; flex-direction: column; letter-spacing: -0.2px; word-spacing: 3px; }
.tree p { height: 36px; display: flex; align-items: center; }
.root { padding-left: 18px; margin-top: 0; background: linear-gradient(#bbb, #bbb) 6px 18px / 9px 1px no-repeat, linear-gradient(#aaa, #aaa) 4px 9px / 2px 20px no-repeat; }
.root svg { width: 26px; height: 29px; }
.root span { margin-left: 7px; margin-top: 2px; }
.leaf { padding-left: 49px; background: linear-gradient(#999, #999) 30px 0 / 1px 18px no-repeat, linear-gradient(#999, #999) 30px 18px / 18px 1px no-repeat; }
.leaf svg { width: 33px; height: 33px; }
.leaf span { padding: 2px 1px 0 2px; line-height: 34px; margin-left: 2px; }
.sel span { background: #f0f0f0; }
.treescroll { margin-top: auto; height: 33px; background: #f0f0f0; padding: 7px 0 0 48px; }
.treescroll div { width: 94px; height: 19px; background: #858585; }
.dt-tabs { display: flex; height: 36px; margin-left: 2px; }
.hi { width: 102px; border: 1px solid #777; border-top: 0; border-left-color: #fff; border-bottom-width: 2px; padding-left: 4px; letter-spacing: -1.1px; font-size: 22px; line-height: 34px; height: 35px; }
.vi { width: 24px; padding-left: 4px; height: 32px; border-bottom: 2px solid #777; border-top: 2px solid #777; border-left: 1px solid #777; line-height: 27px; margin-top: 1px; letter-spacing: -1px; }
.dt-tabs em { width: 28px; height: 28px; margin-top: 6px; border: 1px solid #b0b0b0; }
.dt-tabs em.prev { margin-left: -1px; }
.prev svg { transform: scaleX(-1); }

.mid { width: 2778px; display: flex; flex-direction: column; border-top: 2px solid #777; }
.canvasrow { display: flex; height: 1306px; margin-left: 4px; border-top: 3px solid #8f8f8f; border-left: 2px solid #777; border-right: 1px solid #777; }
.canvas { width: 2733px; height: 1303px; background: #fff; position: relative; overflow: hidden; }
.vscroll { width: 34px; padding: 252px 0 0 7px; border-right: 2px solid #e2e2e2; }
.vscroll div { width: 19px; height: 635px; background: #858585; }
.hscroll { height: 39px; margin-left: 4px; border-left: 2px solid #777; padding: 6px 0 0 270px; }
.hscroll div { width: 2165px; height: 19px; background: #858585; }
.doctabs { display: flex; height: 43px; margin-left: 4px; }
.dtab { display: flex; align-items: center; border: 2px solid #000; border-left-color: #666; border-top: 0; border-radius: 0 0 4px 4px; padding-left: 1px; }
.dtab svg { width: 32px; height: 32px; }
.dtab span { margin-left: 3px; letter-spacing: -0.3px; word-spacing: 3px; margin-top: 3px; }
.dtab.a { width: 133px; height: 41px; }
.dtab.b { width: 123px; height: 39px; border-top: 2px solid #777; }
.rest { flex: 1; border-top: 2px solid #666; display: flex; justify-content: flex-end; padding: 8px 2px 0 0; }
.rest b { width: 25px; height: 25px; border-right: 2px solid #888; border-bottom: 2px solid #888; }

.right { width: 48px; border-top: 2px solid #777; border-left: 2px solid #666; border-right: 1px solid #999; padding: 11px 0 0 3px; display: flex; flex-direction: column; align-items: center; height: 964px; }
.right i { width: 36px; height: 42.060px; display: flex; align-items: center; justify-content: center; flex: none; }
.right svg { width: 32px; height: 29px; }
.right i.tall { height: 44px; margin-top: 7px; }
.right i.tall svg { height: 31px; }
.right hr { width: 43px; height: 2px; background: #a0a0a0; margin: 0 0 0 -3px; flex: none; }
.rt { width: 4px; height: 6px; margin: 5px 0; border: 3px solid transparent; border-left: 4px solid #000; border-right: 0; flex: none; }
.rt + hr { margin-top: 1px; }
.right .rt.g { border-left-color: #aaa; }
.right hr.end { width: 48px; margin-top: 0; }

/* schematic text */
.ct { font-family: "Liberation Sans", Arial, sans-serif; font-size: 43.500px; letter-spacing: 0; word-spacing: 0; }
.bold { font-weight: 700; }

/* floating windows */
.win { position: absolute; background: #f0f0f0; border: 2px solid #b4b4b4; border-radius: 16px; display: flex; flex-direction: column; }
.mm { left: 371px; top: 18px; width: 361px; height: 322px; box-shadow: 0 30px 60px rgba(0,0,0,.27), 0 0 34px rgba(0,0,0,.13); }
.wt { background: #f3f3f3; color: #959595; display: flex; align-items: center; justify-content: space-between; border-radius: 14px 14px 0 0; }
.mm .wt { height: 56px; padding: 0 23px 0 12px; letter-spacing: 0.15px; }
.wt > span { margin-top: 2px; }
.mm .wt svg { margin-top: -3px; }
.lcd { height: 62px; border: 2px solid; border-color: #ddd #777 #777 #ddd; padding: 1px 2px 2px 1px; background: #fff; }
.lcd div { height: 56px; background: #000; border: 2px solid #999; color: #fff; font: 16.500px "Liberation Sans", Arial, sans-serif; letter-spacing: 0; word-spacing: 0; text-align: center; line-height: 19px; padding-top: 1px; }
button { font: inherit; letter-spacing: -0.3px; color: #000; background: #fdfdfd; border: 1px solid #d0d0d0; border-bottom-color: #bbb; border-radius: 4px; padding: 0; display: flex; align-items: center; justify-content: center; }
button.act { background: #cfe3f5; border-color: #1f5596; }
.grp { border: 1px solid #dcdcdc; display: flex; flex: none; }
.g1 { height: 56px; margin: 15px 13px 0 12px; padding: 7px 0 0 24px; gap: 17px; }
.g1 button { width: 58px; height: 39px; font-size: 22px; padding-top: 1px; }
.g2 { height: 50px; width: 228px; margin: -3px 0 0 63px; padding: 10px 0 0 18px; gap: 23px; }
.g2 button { width: 85px; height: 29px; }
.g2 .act { width: 82px; }
.mm-foot { display: flex; padding: 16px 15px 0 15px; justify-content: space-between; align-items: flex-start; }
.mm-foot button { width: 142px; height: 35px; margin: 5px 0 0 2px; padding-top: 2px; }
.term { width: 26px; text-align: center; line-height: 22px; }
.term span { display: block; margin-top: -1px; height: 23px; }
.term b { display: block; width: 26px; height: 26px; border: 8px solid #c3c3c3; border-radius: 50%; background: #fff; margin-top: 3px; }
.term.neg { margin-top: 3px; }
.term.neg span { padding-left: 10px; }

.gv { left: 1438px; top: 263px; width: 701px; height: 626px; box-shadow: 0 40px 80px rgba(0,0,0,.25), 0 0 50px rgba(0,0,0,.17); }
.gv .wt { height: 57px; padding: 0 37px 0 12px; border-bottom: 1px solid #999; letter-spacing: -0.4px; }
.gctl { display: flex; gap: 73px; color: #858585; margin-top: -2px; }
.gmenu { height: 46px; display: flex; align-items: center; padding-left: 11px; border-bottom: 1px solid #999; letter-spacing: -0.5px; padding-top: 3px; }
.gtools { height: 46px; display: flex; border-bottom: 2px solid #b5b5b5; overflow: hidden; padding-top: 1px; }
.gtools i { width: 39.500px; height: 35px; display: flex; align-items: center; justify-content: center; flex: none; }
.gtools svg { width: 30px; height: 30px; }
.gtools hr { width: 4px; height: 32px; flex: none; background: linear-gradient(#999,#999) 1px 0 / 1px 100% no-repeat; }
.gtools hr.n { width: 4px; }
.gtools hr.z { width: 6px; background-position-x: 2px; }
.gtools .hot { background: #cce4f9; border: 1px solid #99ccf5; border-radius: 3px; }
.gtools .part { justify-content: flex-start; padding-left: 3px; width: 12px; overflow: hidden; }
.gtabs { height: 33px; display: flex; align-items: flex-end; padding-left: 4px; font-size: 21px; letter-spacing: -0.45px; }
.gtabs span { width: 192px; height: 30px; border-right: 2px solid #777; padding-left: 4px; line-height: 30px; }
.gtabs .t2 { border-right: 0; }
.gtabs .t3 { width: 195px; height: 32px; line-height: 28px; border-top: 1px solid #fff; border-left: 1px solid #fff; padding-left: 5px; }
.gar { display: flex; margin-left: auto; padding-right: 3px; align-self: flex-start; padding-top: 2px; }
.gar em { width: 28px; height: 28px; border: 1px solid #b0b0b0; }
.plot { margin: 1px 5px 0 5px; background: #000; height: 395px; position: relative; }
.pt { font-family: "Liberation Sans", Arial, sans-serif; font-size: 42px; letter-spacing: .5px; word-spacing: 0; color: #fff; text-align: center; height: 51px; line-height: 51px; }
.p2 { font-size: 42.500px; letter-spacing: .3px; height: 54px; line-height: 53px; }
.sheetbox { margin: 0 6px 0 5px; height: 285px; border: 1px solid #a0a0a0; display: grid; grid-template-columns: 39px 205px 150px 1fr; grid-template-rows: 39px 40px 40px 40px 1fr; font-size: 21px; letter-spacing: -0.5px; }
.hd { background: #f0f0f0; border-right: 1px solid #777; border-bottom: 2px solid #999; text-align: center; line-height: 39px; }
.hd.last { border-right: 0; }
.cl { letter-spacing: -0.6px; text-align: left; }
.rn { background: #f0f0f0; border-right: 1px solid #999; border-bottom: 2px solid #999; text-align: center; line-height: 39px; }
.c { color: #fff; border-right: 2px solid #fff; border-bottom: 2px solid #fff; line-height: 28px; padding-left: 1px; }
.fill { background: #f0f0f0; border-right: 1px solid #999; }
.mark { position: absolute; left: -6px; top: 213px; }
.gstat { margin-top: 4px; border-top: 2px solid #999; display: flex; align-items: center; justify-content: space-between; padding: 3px 3px 0 2px; flex: 1; letter-spacing: 0.05px; }

/* spreadsheet view */
.sheetview { height: 179px; display: flex; }
.sv-side { width: 47px; display: flex; flex-direction: column; align-items: flex-start; padding: 4px 0 0 10px; gap: 3px; }
.sv-side em { width: 23px; height: 22px; }
.vtitle { width: 40px; height: 121px; margin-left: -8px; background: linear-gradient(#d8e4f1, #bfcadb); overflow: hidden; display: flex; justify-content: flex-start; align-items: flex-start; flex-direction: column-reverse; }
.vtitle span { writing-mode: vertical-rl; transform: rotate(180deg); font-size: 22.500px; letter-spacing: .6px; line-height: 30px; padding-top: 4px; }
.sv-main { width: 2970px; padding-top: 7px; }
.log { height: 129px; background: #fff; border: 2px solid #828790; padding: 3px 0 0 7px; line-height: 36px; }
.l1 { letter-spacing: 0.1px; }
.l2 { letter-spacing: 0; }
.svtabs { display: flex; gap: 2px; height: 38px; margin-top: 4px; border-top: 3px solid #8a8a8a; padding-left: 2px; font-size: 21.500px; letter-spacing: -0.8px; word-spacing: 1px; }
.svtabs span { height: 29px; border-right: 2px solid #777; border-bottom: 2px solid #777; line-height: 29px; padding-left: 4px; }
.svtabs .cm { letter-spacing: -1.25px; }
.svtabs .cur { background: #f0f0f0; margin-top: -3px; height: 34px; line-height: 35px; padding-left: 6px; }

/* status bar */
.status { height: 34px; border-top: 2px solid #a0a0a0; display: flex; align-items: center; line-height: 30px; padding-top: 3px; }
.help { width: 2446px; padding-left: 3px; letter-spacing: -0.4px; }
.dash { width: 148px; border-right: 1px solid #ccc; }
.blank { width: 183px; height: 30px; border-right: 1px solid #ccc; }
.tran { width: 183px; padding-left: 4px; border-right: 1px solid #ccc; letter-spacing: -0.3px; }
.prog { display: flex; gap: 2px; padding-left: 4px; }
.prog b { width: 6px; height: 13px; border: 1px solid #aaa; border-right: 0; border-bottom: 0; background: #e6e6e0; }

/* taskbar */
.taskbar { height: 96px; border-top: 2px solid #434852; display: flex; color: #fff; position: relative; background: linear-gradient(90deg, #1c222c 0, #1c222c 640px, #15205a 730px, #15205f 960px, #171e55 1080px, #162849 1210px, #131c66 1320px, #1b1d4a 1400px, #162058 1460px, #171a48 1540px, #20212a 1640px, #1b1e38 1700px, #14205a 1780px, #15205a 1880px, #20212b 1970px, #1a2440 2080px, #1c222c 2300px, #1c222c 100%); }
.weather { width: 1119px; padding: 10px 0 0 38px; display: flex; gap: 15px; }
.weather svg { margin-top: 10px; }
.weather p { line-height: 32px; height: 32px; margin-top: 4px; font-size: 22.500px; letter-spacing: -0.6px; }
.weather p + p { margin-top: 0; margin-left: -1px; letter-spacing: 0.3px; }
.sub { color: #c9ccd0; }
.apps { display: flex; align-items: center; width: 1540px; height: 92px; }
.search { width: 200px; height: 64px; margin-left: 28px; border-radius: 32px; background: rgba(255,255,255,.09); border: 1px solid rgba(255,255,255,.08); display: flex; align-items: center; padding-left: 44px; gap: 9px; letter-spacing: -0.2px; }
.tv { margin-left: 26px; }
.chat { margin-left: 40px; }
.fold { margin-left: 41px; }
.run { margin-left: 39px; position: relative; }
.run b, .tile b { position: absolute; height: 6px; border-radius: 3px; }
.run b { left: 18px; bottom: -14px; width: 13px; background: #9a9dab; }
.lamp { margin-left: 39px; }
.tile { margin-left: 23px; width: 80px; height: 80px; border-radius: 8px; background: rgba(255,255,255,.1); border: 1px solid rgba(255,255,255,.1); display: flex; align-items: center; justify-content: center; position: relative; }
.tile b { left: 23px; bottom: 1px; width: 32px; background: #6cbcf8; }
.tray { display: flex; align-items: center; height: 92px; width: 365px; }
.chev { margin-left: 11px; }
.net { margin-left: 26px; }
.spk { margin-left: 14px; }
.bat { margin-left: 16px; }
.clock { margin-left: auto; padding: 2px 29px 0 0; text-align: right; line-height: 32px; letter-spacing: 0; }
.date { letter-spacing: 0.3px; }
```
